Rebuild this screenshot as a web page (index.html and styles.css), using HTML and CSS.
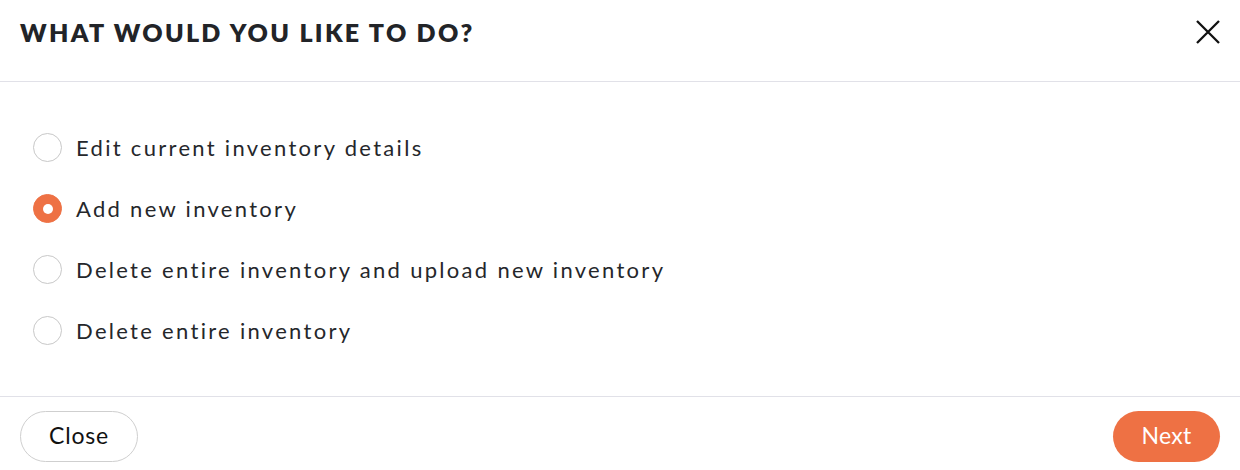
FILE: index.html
```html
<!DOCTYPE html>
<html lang="en">
<head>
<meta charset="utf-8">
<title>What would you like to do?</title>
<link rel="stylesheet" href="styles.css">
</head>
<body>
<div class="modal">
  <header class="modal-header">
    <h1 class="modal-title">WHAT WOULD YOU LIKE TO DO?</h1>
    <button class="icon-close" aria-label="Close">
      <svg width="24" height="24" viewBox="0 0 24 24"><path d="M1 1 L23 23 M23 1 L1 23" stroke="#111" stroke-width="2.3" fill="none"/></svg>
    </button>
  </header>
  <main class="modal-body">
    <label class="option"><span class="radio"></span><span class="option-text">Edit current inventory details</span></label>
    <label class="option"><span class="radio checked"></span><span class="option-text">Add new inventory</span></label>
    <label class="option"><span class="radio"></span><span class="option-text">Delete entire inventory and upload new inventory</span></label>
    <label class="option"><span class="radio"></span><span class="option-text">Delete entire inventory</span></label>
  </main>
  <footer class="modal-footer">
    <button class="btn btn-outline">Close</button>
    <button class="btn btn-primary">Next</button>
  </footer>
</div>
</body>
</html>
```
FILE: styles.css
```css
html, body {
  margin: 0;
  padding: 0;
  background: #fff;
}
body {
  font-family: Lato, "Liberation Sans", sans-serif;
  color: #25272b;
}
.modal {
  width: 1240px;
  height: 470px;
  display: flex;
  flex-direction: column;
}
.modal-header {
  height: 82px;
  box-sizing: content-box;
  border-bottom: 1px solid #e1e1e8;
  display: flex;
  align-items: flex-start;
  justify-content: space-between;
  padding: 0 20px;
}
.modal-title {
  margin: 0;
  height: 63px;
  display: flex;
  align-items: center;
  font-size: 25px;
  font-weight: 800;
  letter-spacing: 2.3px;
  color: #222428;
}
.icon-close {
  margin-top: 20px;
  width: 24px;
  height: 24px;
  padding: 0;
  border: 0;
  background: none;
  display: flex;
}
.modal-body {
  padding: 35px 33px 35px 33px;
  display: flex;
  flex-direction: column;
  flex: 1;
}
.option {
  height: 61px;
  display: flex;
  align-items: center;
  gap: 14px;
}
.radio {
  width: 27px;
  height: 27px;
  border: 1px solid #c8c8c8;
  border-radius: 50%;
  box-sizing: content-box;
  flex: none;
}
.radio.checked {
  border-color: #ee7144;
  background: #ee7144;
  position: relative;
}
.radio.checked::after {
  content: "";
  position: absolute;
  left: 9px;
  top: 9px;
  width: 10px;
  height: 10px;
  border-radius: 50%;
  background: #fff;
}
.option-text {
  font-size: 22px;
  letter-spacing: 2.3px;
  color: #25272b;
}
.modal-footer {
  border-top: 1px solid #e1e1e8;
  padding: 14px 20px 8px;
  display: flex;
  justify-content: space-between;
}
.btn {
  height: 51px;
  border-radius: 26px;
  font-family: Lato, "Liberation Sans", sans-serif;
  font-size: 23px;
  line-height: 1;
  padding: 0 0 3px;
}
.btn-outline {
  width: 118px;
  background: #fff;
  border: 1px solid #cfcfcf;
  color: #111;
  letter-spacing: 0.8px;
}
.btn-primary {
  width: 107px;
  background: #ee7144;
  border: 0;
  color: #fff;
  letter-spacing: 0.3px;
}
```
